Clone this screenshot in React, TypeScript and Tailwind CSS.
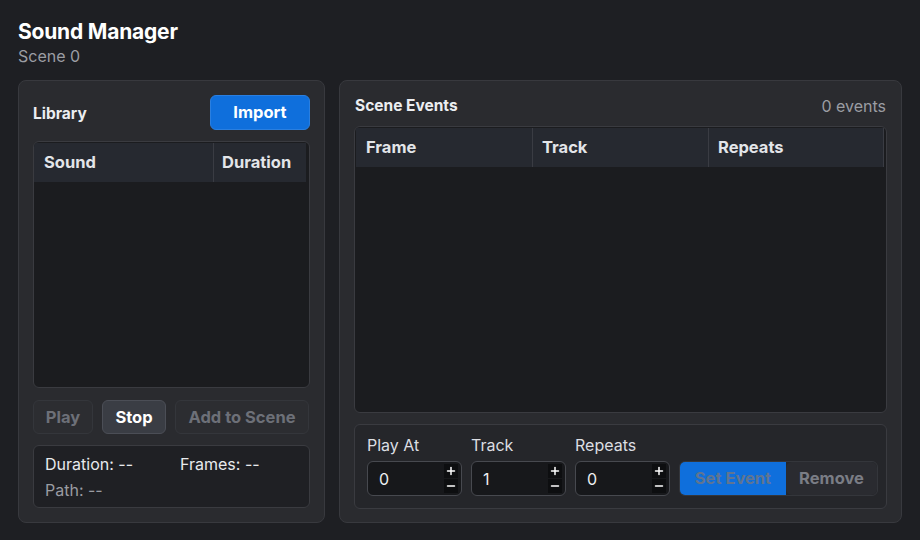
import { Plus, Minus } from "lucide-react";

const font = { fontFamily: "Inter, 'Noto Sans', sans-serif" };

function Spinner({ value }: { value: string }) {
  return (
    <div className="relative flex h-[35px] w-[95px] shrink-0 items-center rounded-md border border-[#47494f] bg-[#17181b] pl-[11px] text-[16px] text-[#eceef1]">
      <span>{value}</span>
      <div className="absolute right-[3px] top-[2px] flex w-[14px] flex-col gap-[1px]">
        <div className="flex h-[14px] items-center justify-center bg-[#0d0e10] text-white">
          <Plus size={12} strokeWidth={3} />
        </div>
        <div className="flex h-[14px] items-center justify-center bg-[#0d0e10] text-white">
          <Minus size={12} strokeWidth={3} />
        </div>
      </div>
    </div>
  );
}

export default function App() {
  return (
    <div style={font} className="h-[540px] w-[920px] overflow-hidden bg-[#1e1f23] px-[18px] pt-[18px] text-white">
      <h1 className="text-[21px] font-bold leading-[27px] tracking-[-0.2px]">Sound Manager</h1>
      <p className="mt-[1px] text-[16px] leading-[20px] text-[#9b9da3]">Scene 0</p>

      <div className="mt-[14px] flex gap-[14px]">
        {/* Library */}
        <div className="flex h-[443px] w-[307px] flex-col rounded-lg border border-[#38393e] bg-[#2a2b2f] px-[14px] pt-[14px]">
          <div className="flex items-center justify-between">
            <span className="mt-[2px] text-[15.5px] font-bold text-[#eceef1]">Library</span>
            <button className="h-[35px] w-[100px] rounded-md border border-[#2a7fe0] bg-[#0f6fdc] text-[16.5px] font-bold text-white">
              Import
            </button>
          </div>
          <div className="mt-[11px] h-[247px] overflow-hidden rounded-md border border-[#3a3b40] bg-[#1b1c1f]">
            <div className="mr-[3px] mt-[1px] flex h-[39px] bg-[#262930] text-[16.5px] font-bold text-[#e3e5e9]">
              <div className="flex w-[180px] items-center border-r border-[#3a3c43] pl-[10px]">Sound</div>
              <div className="flex flex-1 items-center pl-[8px]">Duration</div>
            </div>
          </div>
          <div className="mt-[12px] flex h-[34px] gap-[9px] text-[16.5px] font-bold">
            <button className="w-[60px] rounded-md border border-[#34363b] bg-[#2c2d31] text-[#6d7078]">Play</button>
            <button className="w-[64px] rounded-md border border-[#4b4e56] bg-[#3a3d44] text-white">Stop</button>
            <button className="w-[134px] rounded-md border border-[#34363b] bg-[#2c2d31] text-[#6d7078]">Add to Scene</button>
          </div>
          <div className="mt-[11px] h-[63px] rounded-md border border-[#3a3b40] bg-[#1f2024] px-[11px] pt-[8px] text-[16px] leading-[21px]">
            <div className="flex">
              <span className="w-[135px] text-[#e8eaed]">Duration: --</span>
              <span className="text-[#e8eaed]">Frames: --</span>
            </div>
            <div className="mt-[5px] text-[#9a9ca2]">Path: --</div>
          </div>
        </div>

        {/* Scene events */}
        <div className="flex h-[443px] w-[563px] flex-col rounded-lg border border-[#38393e] bg-[#2a2b2f] px-[14px] pt-[13px]">
          <div className="flex items-center justify-between pl-[1px] pr-[1px]">
            <span className="text-[15.5px] font-bold text-[#eceef1]">Scene Events</span>
            <span className="text-[16px] text-[#9b9da3]">0 events</span>
          </div>
          <div className="mt-[8px] h-[287px] overflow-hidden rounded-md border border-[#3a3b40] bg-[#1b1c1f]">
            <div className="ml-[1px] mr-[2px] mt-[1px] flex h-[39px] bg-[#262930] text-[16.5px] font-bold text-[#e3e5e9]">
              <div className="flex w-[177px] items-center border-r border-[#3a3c43] pl-[10px]">Frame</div>
              <div className="flex w-[176px] items-center border-r border-[#3a3c43] pl-[9px]">Track</div>
              <div className="flex flex-1 items-center border-r border-[#3a3c43] pl-[9px]">Repeats</div>
            </div>
          </div>
          <div className="mt-[11px] flex h-[85px] gap-[9px] rounded-md border border-[#3a3b40] bg-[#25262a] pl-[12px] pr-[6px] pt-[9px]">
            {[
              ["Play At", "0"],
              ["Track", "1"],
              ["Repeats", "0"],
            ].map(([label, v]) => (
              <div key={label} className="flex shrink-0 flex-col">
                <span className="text-[16px] leading-[22px] text-[#dcdee2]">{label}</span>
                <div className="mt-[5px]">
                  <Spinner value={v} />
                </div>
              </div>
            ))}
            <div className="mt-[27px] flex h-[35px] w-[199px] shrink-0 overflow-hidden rounded-md border border-[#34363b] text-[16.5px] font-bold">
              <div className="flex w-[106px] items-center justify-center bg-[#0f6fdc] text-[#5f7591]">Set Event</div>
              <div className="flex flex-1 items-center justify-center rounded-md bg-[#2a2b30] text-[#7a7d85]">Remove</div>
            </div>
          </div>
        </div>
      </div>
    </div>
  );
}
